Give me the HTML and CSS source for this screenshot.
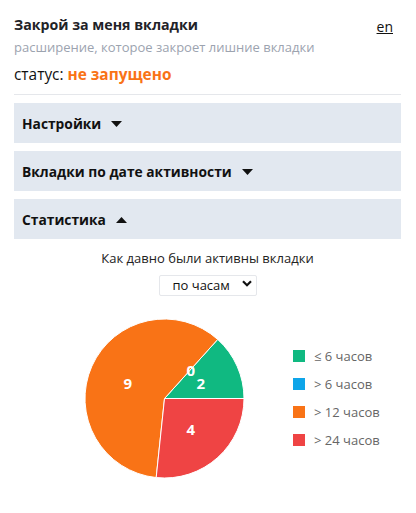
FILE: index.html
```html
<!DOCTYPE html>
<html lang="ru">
<head>
<meta charset="utf-8">
<link rel="stylesheet" href="styles.css">
</head>
<body>
<div class="app">
  <header class="top">
    <div class="titles">
      <h1 class="title">Закрой за меня вкладки</h1>
      <p class="subtitle">расширение, которое закроет лишние вкладки</p>
    </div>
    <a class="lang" href="#">en</a>
  </header>
  <p class="status">статус: <span class="status-val">не запущено</span></p>
  <hr class="sep">
  <div class="panel">
    <span>Настройки</span>
    <svg class="caret" width="11" height="6" viewBox="0 0 11 6"><path d="M0 0h11L5.5 6z"/></svg>
  </div>
  <div class="panel">
    <span>Вкладки по дате активности</span>
    <svg class="caret" width="11" height="6" viewBox="0 0 11 6"><path d="M0 0h11L5.5 6z"/></svg>
  </div>
  <div class="panel">
    <span>Статистика</span>
    <svg class="caret" width="11" height="6" viewBox="0 0 11 6"><path d="M0 6h11L5.5 0z"/></svg>
  </div>
  <section class="stats">
    <p class="stats-title">Как давно были активны вкладки</p>
    <div class="select-wrap">
      <select class="select"><option>по часам</option></select>
      <svg class="chev" width="10" height="7" viewBox="0 0 10 7"><path d="M1 1.2l4 4 4-4" fill="none" stroke="#111" stroke-width="2.2"/></svg>
    </div>
    <div class="chart">
      <svg class="pie" width="161" height="161" viewBox="0 0 161 161">
        <path d="M80.5 80.5 L160 80.5 A79.5 79.5 0 0 0 133.69 21.42 Z" fill="#10b981" stroke="#fff" stroke-width="1"/>
        <path d="M80.5 80.5 L133.69 21.42 A79.5 79.5 0 1 0 72.19 159.57 Z" fill="#f97316" stroke="#fff" stroke-width="1"/>
        <path d="M80.5 80.5 L72.19 159.57 A79.5 79.5 0 0 0 160 80.5 Z" fill="#ef4444" stroke="#fff" stroke-width="1"/>
        <g class="lbl">
          <text x="43.7" y="65" text-anchor="middle" dominant-baseline="central">9</text>
          <text x="106.7" y="52" text-anchor="middle" dominant-baseline="central">0</text>
          <text x="116.7" y="65" text-anchor="middle" dominant-baseline="central">2</text>
          <text x="106.7" y="111" text-anchor="middle" dominant-baseline="central">4</text>
        </g>
      </svg>
      <ul class="legend">
        <li><i class="sw green"></i>≤ 6 часов</li>
        <li><i class="sw blue"></i>&gt; 6 часов</li>
        <li><i class="sw orange"></i>&gt; 12 часов</li>
        <li><i class="sw red"></i>&gt; 24 часов</li>
      </ul>
    </div>
  </section>
</div>
</body>
</html>
```
FILE: styles.css
```css
* { box-sizing: border-box; }
html, body { margin: 0; padding: 0; background: #fff; }
body {
  font-family: "Open Sans", "Noto Sans", sans-serif;
  color: #111;
}
.app {
  padding: 14px 15px 0 14px;
}
.top {
  display: flex;
  justify-content: space-between;
  align-items: flex-start;
}
.title {
  margin: 0;
  font-size: 14.2px;
  line-height: 22px;
  font-weight: 700;
  color: #1f2328;
}
.subtitle {
  margin: 1px 0 0;
  font-size: 13px;
  line-height: 20px;
  color: #9ca3af;
}
.lang {
  margin: 2px 8px 0 0;
  font-size: 14px;
  line-height: 22px;
  color: #111;
  text-decoration: underline;
}
.status {
  margin: 6px 0 0;
  font-size: 15.4px;
  line-height: 23px;
}
.status-val {
  color: #f97316;
  font-weight: 700;
}
.sep {
  margin: 8px 0 8px;
  border: 0;
  border-top: 1px solid #e5e7eb;
}
.panel {
  display: flex;
  align-items: center;
  gap: 10px;
  height: 40px;
  padding: 0 8px;
  margin-bottom: 8px;
  background: #e2e8f0;
  font-size: 13.8px;
  font-weight: 700;
  color: #111;
}
.caret { fill: #111; margin-top: 1px; }
.stats { text-align: center; }
.stats-title {
  margin: 9px 0 0;
  font-size: 13px;
  line-height: 20px;
  color: #222;
}
.select-wrap {
  position: relative;
  display: inline-block;
  margin-top: 5px;
}
.select {
  -webkit-appearance: none;
  appearance: none;
  width: 98px;
  height: 21px;
  border: 1px solid #e5e7eb;
  border-radius: 2px;
  background: #fff;
  font-family: inherit;
  font-size: 13px;
  color: #111;
  padding: 0 24px 0 13px;
}
.chev {
  position: absolute;
  right: 5px;
  top: 7px;
  pointer-events: none;
}
.chart {
  display: flex;
  align-items: center;
  margin-top: 22px;
  padding-left: 70px;
}
.pie { display: block; }
.lbl text {
  fill: #fff;
  font-size: 15px;
  font-weight: 700;
  font-family: "Open Sans", sans-serif;
}
.legend {
  list-style: none;
  margin: 0 0 0 48px;
  padding: 0;
  text-align: left;
}
.legend li {
  display: flex;
  align-items: center;
  height: 28px;
  font-size: 13px;
  color: #666;
}
.sw {
  display: inline-block;
  width: 12px;
  height: 12px;
  margin-right: 9px;
}
.green { background: #10b981; }
.blue { background: #0ea5e9; }
.orange { background: #f97316; }
.red { background: #ef4444; }
```
